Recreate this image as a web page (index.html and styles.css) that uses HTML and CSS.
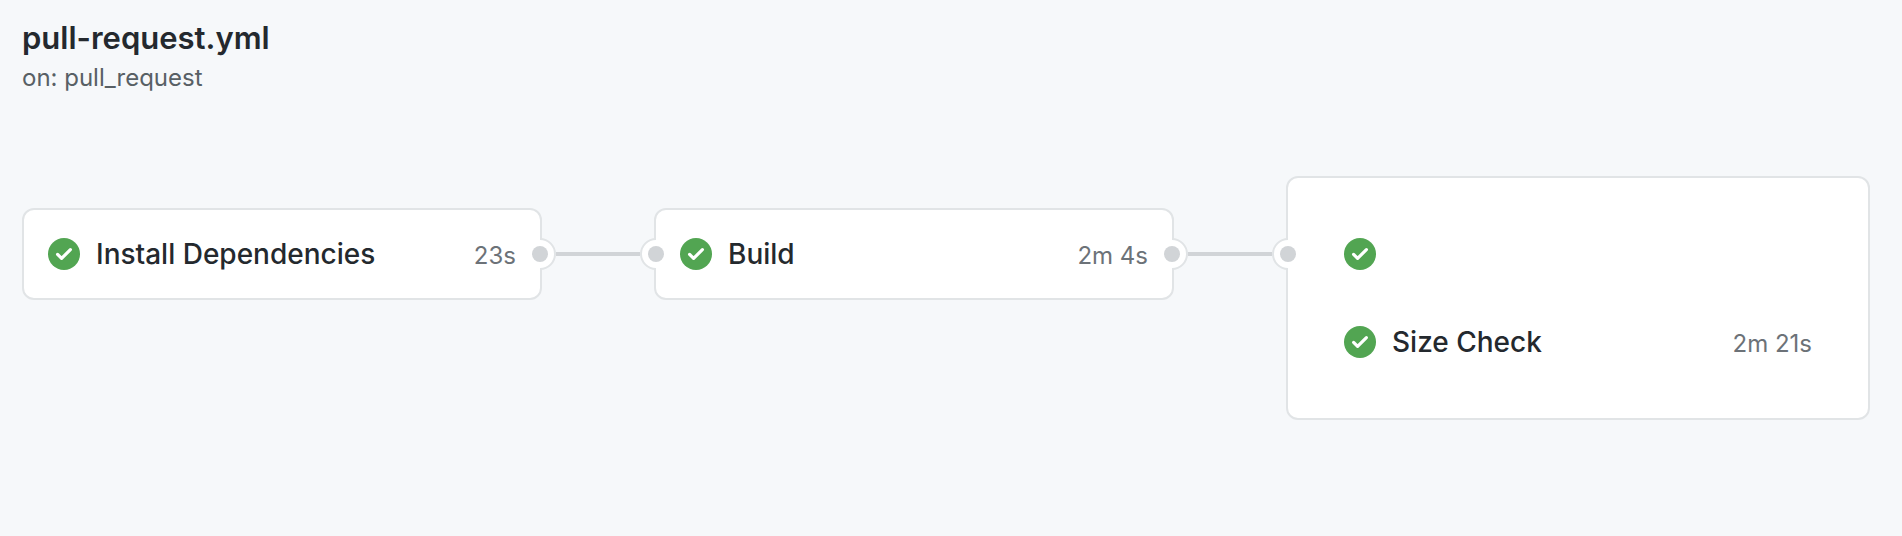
FILE: index.html
```
<!DOCTYPE html>
<html lang="en">
<head>
<meta charset="utf-8">
<title>pull-request.yml</title>
<link rel="stylesheet" href="styles.css">
</head>
<body>
<svg class="defs" aria-hidden="true">
  <symbol id="check" viewBox="0 0 32 32">
    <circle cx="16" cy="16" r="16" fill="#52a552"/>
    <path d="M9.6 16.4 13.6 20.4 22.4 11.6" fill="none" stroke="#fff" stroke-width="3.2" stroke-linecap="round" stroke-linejoin="round"/>
  </symbol>
  <symbol id="port" viewBox="0 0 32 32">
    <path d="M16 1a15 15 0 0 1 0 30" fill="#fff" stroke="#e1e4e6" stroke-width="2"/>
    <circle cx="16" cy="16" r="8" fill="#d1d4d7"/>
  </symbol>
</svg>
<main class="workflow">
  <header class="header">
    <h1 class="title">pull-request.yml</h1>
    <p class="trigger">on: pull_request</p>
  </header>
  <div class="graph">
    <section class="card">
      <div class="job">
        <svg class="status" role="img" aria-label="Success"><use href="#check"/></svg>
        <span class="name">Install Dependencies</span>
        <span class="time">23s</span>
      </div>
      <svg class="port port-out" aria-hidden="true"><use href="#port"/></svg>
    </section>
    <div class="connector"></div>
    <section class="card">
      <svg class="port port-in" aria-hidden="true"><use href="#port"/></svg>
      <div class="job">
        <svg class="status" role="img" aria-label="Success"><use href="#check"/></svg>
        <span class="name">Build</span>
        <span class="time">2m 4s</span>
      </div>
      <svg class="port port-out" aria-hidden="true"><use href="#port"/></svg>
    </section>
    <div class="connector"></div>
    <section class="card card-group">
      <svg class="port port-in" aria-hidden="true"><use href="#port"/></svg>
      <div class="job">
        <svg class="status" role="img" aria-label="Success"><use href="#check"/></svg>
      </div>
      <div class="job">
        <svg class="status" role="img" aria-label="Success"><use href="#check"/></svg>
        <span class="name">Size Check</span>
        <span class="time">2m 21s</span>
      </div>
    </section>
  </div>
</main>
</body>
</html>
```
FILE: styles.css
```
* {
  box-sizing: border-box;
}

body {
  margin: 0;
  background: #f6f8fa;
  color: #24292e;
  font-family: Inter, "Liberation Sans", sans-serif;
}

.defs {
  position: absolute;
  width: 0;
  height: 0;
}

.workflow {
  padding: 18px 32px 32px 22px;
}

.title {
  margin: 0;
  font-size: 31px;
  line-height: 40px;
  font-weight: 600;
}

.trigger {
  margin: 2px 0 0;
  font-size: 24px;
  line-height: 36px;
  color: #586065;
}

.graph {
  display: grid;
  grid-template-columns: 65fr 112px 65fr 112px 73fr;
  align-items: start;
  margin-top: 80px;
}

.card {
  position: relative;
  margin-top: 32px;
  border: 2px solid #e1e4e6;
  border-radius: 12px;
  background: #fff;
}

.card-group {
  margin-top: 0;
  padding: 32px;
}

.job {
  display: flex;
  align-items: center;
  gap: 16px;
  height: 88px;
  padding: 0 24px;
}

.status {
  flex: none;
  width: 32px;
  height: 32px;
}

.name {
  font-size: 28px;
  line-height: 40px;
  font-weight: 500;
}

.time {
  margin-left: auto;
  padding-top: 4px;
  font-size: 24px;
  line-height: 36px;
  color: #6c7278;
}

.port {
  position: absolute;
  top: 28px;
  width: 32px;
  height: 32px;
}

.card-group .port {
  top: 60px;
}

/* Ports are centred just inside the card's outer edge. */
.port-out {
  right: -16px;
}

.port-in {
  left: -16px;
  transform: scaleX(-1);
}

.connector {
  height: 4px;
  margin: 76px 14px 0;
  background: #d1d4d7;
}
```
